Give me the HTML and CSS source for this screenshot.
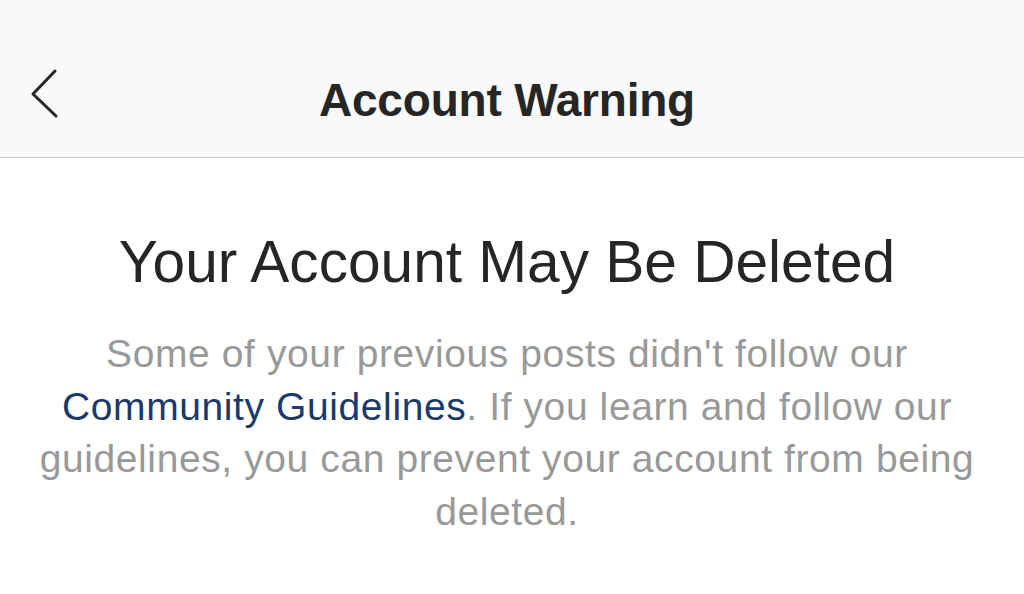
FILE: index.html
```html
<!DOCTYPE html>
<html lang="en">
<head>
<meta charset="utf-8">
<title>Account Warning</title>
<link rel="stylesheet" href="styles.css">
</head>
<body>
<header class="nav">
  <div class="nav-left">
    <svg class="back" width="34" height="52" viewBox="0 0 34 52" aria-label="Back">
      <path d="M29 3 L7 26 L30 48" fill="none" stroke="#262626" stroke-width="3" stroke-linecap="round" stroke-linejoin="round"/>
    </svg>
  </div>
  <h1 class="nav-title">Account Warning</h1>
  <div class="nav-right"></div>
</header>
<main class="content">
  <h2 class="headline">Your Account May Be Deleted</h2>
  <p class="message">Some of your previous posts didn't follow our <a class="link" href="#">Community Guidelines</a>. If you learn and follow our guidelines, you can prevent your account from being deleted.</p>
</main>
</body>
</html>
```

FILE: styles.css
```css
html, body {
  margin: 0;
  padding: 0;
  background: #ffffff;
  font-family: "Liberation Sans", Arial, sans-serif;
}

.nav {
  display: grid;
  grid-template-columns: 1fr auto 1fr;
  align-items: start;
  height: 157px;
  padding-right: 10px;
  background: #f9f9f9;
  border-bottom: 1px solid #c8c8c8;
}

.nav-left {
  padding-left: 26px;
  padding-top: 68px;
}

.back {
  display: block;
}

.nav-title {
  margin: 0;
  padding-top: 73px;
  font-size: 46px;
  line-height: 54px;
  font-weight: 700;
  color: #262626;
  letter-spacing: -0.2px;
}

.content {
  padding: 69px 25px 0 15px;
  text-align: center;
}

.headline {
  margin: 0;
  font-size: 58.6px;
  line-height: 70px;
  font-weight: 400;
  color: #262626;
}

.message {
  margin: 31px 0 0;
  font-size: 39px;
  line-height: 52.67px;
  letter-spacing: 0.6px;
  color: #999999;
}

.link {
  color: #1b3a6b;
  text-decoration: none;
}
```
